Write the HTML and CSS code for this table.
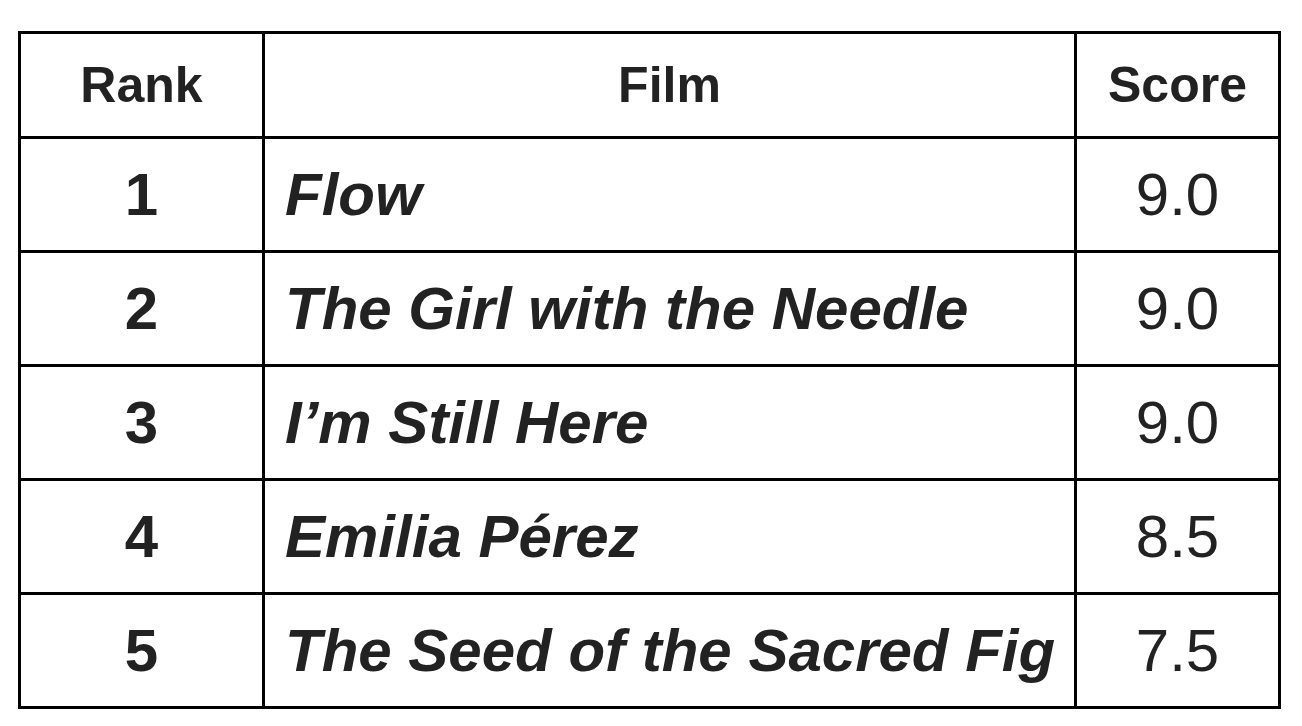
FILE: index.html
```html
<!DOCTYPE html>
<html>
<head>
<meta charset="utf-8">
<link rel="stylesheet" href="styles.css">
</head>
<body>
<table class="films">
  <colgroup>
    <col class="c-rank">
    <col class="c-film">
    <col class="c-score">
  </colgroup>
  <thead>
    <tr class="head">
      <th>Rank</th>
      <th>Film</th>
      <th>Score</th>
    </tr>
  </thead>
  <tbody>
    <tr><td class="rank">1</td><td class="film">Flow</td><td class="score">9.0</td></tr>
    <tr><td class="rank">2</td><td class="film">The Girl with the Needle</td><td class="score">9.0</td></tr>
    <tr><td class="rank">3</td><td class="film">I’m Still Here</td><td class="score">9.0</td></tr>
    <tr><td class="rank">4</td><td class="film">Emilia Pérez</td><td class="score">8.5</td></tr>
    <tr><td class="rank">5</td><td class="film">The Seed of the Sacred Fig</td><td class="score">7.5</td></tr>
  </tbody>
</table>
</body>
</html>
```
FILE: styles.css
```css
html, body {
  margin: 0;
  padding: 0;
  background: #fff;
}
body {
  padding: 31px 0 0 18px;
  font-family: "Liberation Sans", Arial, sans-serif;
  color: #222;
}
.films {
  border-collapse: collapse;
  table-layout: fixed;
  width: 1260px;
}
.c-rank { width: 244px; }
.c-film { width: 812px; }
.c-score { width: 204px; }
.films th,
.films td {
  border: 3px solid #000;
  padding: 0;
  vertical-align: middle;
}
.films th {
  height: 102px;
  font-size: 50px;
  font-weight: bold;
  text-align: center;
}
.films td {
  height: 111px;
  font-size: 60px;
}
.rank {
  text-align: center;
  font-weight: bold;
}
.film {
  font-weight: bold;
  font-style: italic;
  padding-left: 20px !important;
  white-space: nowrap;
}
.score {
  text-align: center;
}
```
